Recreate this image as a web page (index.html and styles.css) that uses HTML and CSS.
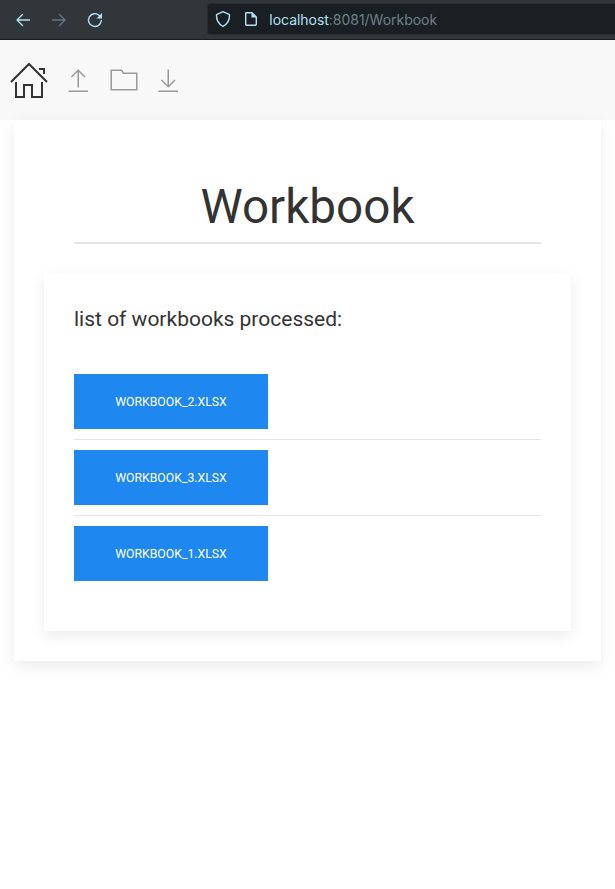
FILE: index.html
```html
<!DOCTYPE html>
<html lang="en">
<head>
<meta charset="utf-8">
<title>Workbook</title>
<link rel="stylesheet" href="styles.css">
</head>
<body>
<header class="browser">
  <div class="controls">
    <svg width="16" height="16" viewBox="0 0 16 16"><path d="M14.5 8H2M7.5 2.5 2 8l5.500 5.500" /></svg>
    <svg class="disabled" width="16" height="16" viewBox="0 0 16 16"><path d="M1.500 8H14M8.500 2.500 14 8l-5.500 5.500" /></svg>
    <svg width="16" height="16" viewBox="0 0 16 16"><path d="M14.300 8.500A6.400 6.400 0 1 1 12.300 3.400" /><path class="solid" d="M15 1v5.500H9.500z" /></svg>
  </div>
  <div class="address">
    <svg width="16" height="18" viewBox="0 0 16 18"><path d="M8 1.700 14.500 4.700C14.700 10 12.500 14 8 16.300 3.500 14 1.300 10 1.500 4.700z" /></svg>
    <svg width="16" height="16" viewBox="0 0 16 16"><path d="M3.300 1.700H9L13.300 6v7.100a1.200 1.200 0 0 1-1.200 1.200H3.900a1.200 1.200 0 0 1-1.200-1.200V2.300a.6.6 0 0 1 .6-.6z" /><path class="solid" d="M8.500 1 14 6.500H8.500z" /></svg>
    <span class="url"><b>localhost</b>:8081/Workbook</span>
  </div>
</header>
<nav class="navbar">
  <a class="active"><svg width="40" height="40" viewBox="0 0 20 20"><polygon points="18.65 11.35 10 2.71 1.35 11.35 .65 10.65 10 1.29 19.35 10.65" /><polygon points="15 4 18 4 18 7 17 7 17 5 15 5" /><polygon points="3 11 4 11 4 18 7 18 7 12 12 12 12 18 16 18 16 11 17 11 17 19 11 19 11 13 8 13 8 19 3 19" /></svg></a>
  <a><svg width="30" height="30" viewBox="0 0 20 20"><polyline class="line" points="5 8 9.500 3.500 14 8" /><rect x="3" y="17" width="13" height="1" /><path class="line" d="M9.500 15V4" /></svg></a>
  <a><svg width="30" height="30" viewBox="0 0 20 20"><polygon class="line" points="9.500 5.500 8.500 3.500 1.500 3.500 1.500 16.500 18.500 16.500 18.500 5.500" /></svg></a>
  <a><svg width="30" height="30" viewBox="0 0 20 20"><polyline class="line" points="14 10 9.500 14.500 5 10" /><rect x="3" y="17" width="13" height="1" /><path class="line" d="M9.500 13.910V3" /></svg></a>
</nav>
<main class="card page">
  <h1>Workbook</h1>
  <section class="card books">
    <h2>list of workbooks processed:</h2>
    <ul>
      <li><button>WORKBOOK_2.XLSX</button></li>
      <li><button>WORKBOOK_3.XLSX</button></li>
      <li><button>WORKBOOK_1.XLSX</button></li>
    </ul>
  </section>
</main>
</body>
</html>
```
FILE: styles.css
```css
* { box-sizing: border-box; }
body { margin: 0; min-height: 100vh; background: #fff; color: #333; font-family: Roboto, sans-serif; }
svg { display: block; flex: none; }

.browser { display: flex; height: 40px; background: #31363b; border-bottom: 1px solid #1b1e20; color: #b4e1f5; }
.browser path { fill: none; stroke: currentColor; stroke-width: 1.4; stroke-linejoin: round; stroke-linecap: round; }
.browser .solid { fill: currentColor; stroke: none; }
.controls { display: flex; align-items: center; gap: 20px; width: 207px; padding-left: 15px; }
.controls .disabled { color: #647780; }
.address { display: flex; align-items: center; flex: 1; height: 32px; margin-top: 3px; padding-left: 8px; gap: 12px; background: #1a1f23; border: 1px solid #282d31; border-right: 0; border-radius: 3px 0 0 3px; }
.address svg { margin-left: -1px; }
.address svg + svg { margin-left: 0; }
.url { margin: 2px 0 0 -1.7px; font: 14px/20px Inter, sans-serif; letter-spacing: -.03px; color: #6c818b; white-space: nowrap; }
.url b { font-weight: 400; color: #b4e1f5; }

.navbar { display: flex; align-items: center; gap: 15px; height: 80px; padding-left: 9px; background: #f8f8f8; color: #999; }
.navbar svg { fill: currentColor; }
.navbar .active { color: #333; }
.navbar .line { fill: none; stroke: currentColor; stroke-width: 1; }

.card { background: #fff; box-shadow: 0 5px 15px rgba(0, 0, 0, .08); }
.page { height: 541px; margin: 0 14px; padding: 60px 30px 30px; }
h1 { height: 64px; margin: 0 30px 30px; border-bottom: 2px solid #e5e5e5; text-align: center; font-size: 47.6px; line-height: 54px; font-weight: 400; }
.books { height: 357px; padding: 30px; }
h2 { margin: 0; font-size: 21px; line-height: 30px; font-weight: 400; }
ul { list-style: none; margin: 40px 0 0; padding: 0; }
li + li { margin-top: 10px; padding-top: 10px; border-top: 1px solid #e5e5e5; }
button { display: block; width: 194px; height: 55px; padding: 2px 0 0; border: 0; background: #1e87f0; color: #fff; font: 12.250px/53px Roboto, sans-serif; }
```
